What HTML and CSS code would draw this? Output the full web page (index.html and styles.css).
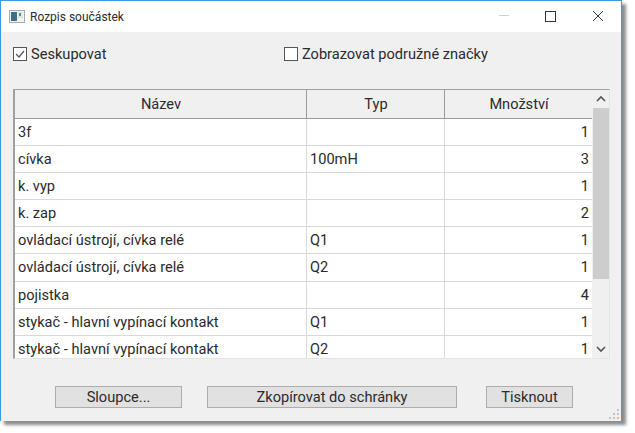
FILE: index.html
```html
<!DOCTYPE html>
<html lang="cs">
<head>
    <meta charset="UTF-8">
    <meta name="viewport" content="width=device-width, initial-scale=1.0">
    <title>Rozpis součástek</title>
    <link rel="stylesheet" href="styles.css">
</head>
<body>
    <div class="window">
        <div class="titlebar">
            <svg class="app-icon" width="16" height="13" viewBox="0 0 16 13">
                <rect x="0.5" y="0.5" width="15" height="12" fill="#f4f4f4" stroke="#a9a9a9"/>
                <rect x="2" y="2" width="6" height="9" fill="#3f7186"/>
                <rect x="9" y="2" width="5" height="6" fill="#dfe9e4"/>
                <rect x="10" y="3" width="2" height="3" fill="#4f9b7d"/>
            </svg>
            <span class="title">Rozpis součástek</span>
            <div class="controls">
                <svg width="47" height="31" viewBox="0 0 47 31"><path d="M19 14.5h10" stroke="#d0d0d0"/></svg>
                <svg width="47" height="31" viewBox="0 0 47 31"><rect x="18.5" y="10.5" width="10" height="10" fill="none" stroke="#333"/></svg>
                <svg width="47" height="31" viewBox="0 0 47 31"><path d="M19 10l10 10M29 10l-10 10" stroke="#333" fill="none"/></svg>
            </div>
        </div>
        <div class="content">
            <div class="options">
                <label class="check check-first">
                    <svg width="14" height="14" viewBox="0 0 14 14">
                        <rect x="0.5" y="0.5" width="13" height="13" fill="#fff" stroke="#555"/>
                        <path d="M3 7l3 3 5-6" fill="none" stroke="#555" stroke-width="1.2"/>
                    </svg>
                    Seskupovat
                </label>
                <label class="check">
                    <svg width="14" height="14" viewBox="0 0 14 14">
                        <rect x="0.5" y="0.5" width="13" height="13" fill="#fff" stroke="#555"/>
                    </svg>
                    Zobrazovat podružné značky
                </label>
            </div>
            <div class="table-box">
                <div class="table">
                    <div class="row head">
                        <div class="cell">Název</div>
                        <div class="cell">Typ</div>
                        <div class="cell">Množství</div>
                    </div>
                    <div class="row"><div class="cell">3f</div><div class="cell"></div><div class="cell num">1</div></div>
                    <div class="row"><div class="cell">cívka</div><div class="cell">100mH</div><div class="cell num">3</div></div>
                    <div class="row"><div class="cell">k. vyp</div><div class="cell"></div><div class="cell num">1</div></div>
                    <div class="row"><div class="cell">k. zap</div><div class="cell"></div><div class="cell num">2</div></div>
                    <div class="row"><div class="cell">ovládací ústrojí, cívka relé</div><div class="cell">Q1</div><div class="cell num">1</div></div>
                    <div class="row"><div class="cell">ovládací ústrojí, cívka relé</div><div class="cell">Q2</div><div class="cell num">1</div></div>
                    <div class="row"><div class="cell">pojistka</div><div class="cell"></div><div class="cell num">4</div></div>
                    <div class="row"><div class="cell">stykač - hlavní vypínací kontakt</div><div class="cell">Q1</div><div class="cell num">1</div></div>
                    <div class="row"><div class="cell">stykač - hlavní vypínací kontakt</div><div class="cell">Q2</div><div class="cell num">1</div></div>
                </div>
                <div class="scrollbar">
                    <svg width="18" height="18" viewBox="0 0 18 18"><path d="M5 11l4-4 4 4" fill="none" stroke="#555" stroke-width="1.6"/></svg>
                    <div class="track"><div class="thumb"></div></div>
                    <svg width="18" height="18" viewBox="0 0 18 18"><path d="M5 7l4 4 4-4" fill="none" stroke="#555" stroke-width="1.6"/></svg>
                </div>
            </div>
            <div class="buttons">
                <div class="btn btn-columns">Sloupce...</div>
                <div class="btn btn-copy">Zkopírovat do schránky</div>
                <div class="btn btn-print">Tisknout</div>
            </div>
            <svg class="grip" width="12" height="12" viewBox="0 0 12 12">
                <path d="M9 1h2v2H9zM5 5h2v2H5zM9 5h2v2H9zM1 9h2v2H1zM5 9h2v2H5zM9 9h2v2H9z" fill="#c4c4c4"/>
            </svg>
        </div>
    </div>
</body>
</html>
```

FILE: styles.css
```css
html, body {
    margin: 0;
    padding: 0;
    background: #fff;
}
body {
    height: 433px;
    overflow: hidden;
    font-family: Roboto, "Open Sans", sans-serif;
    font-size: 14.6px;
    color: #2b2b2b;
}
.window {
    width: 622px;
    height: 421px;
    box-sizing: border-box;
    border: 1px solid #3d9ae0;
    border-bottom: 0;
    background: #f0f0f0;
    box-shadow: 4px 4px 3px #8d8d8d;
    display: flex;
    flex-direction: column;
}
.titlebar {
    height: 31px;
    flex: none;
    background: #fff;
    display: flex;
    align-items: center;
    padding-left: 8px;
}
.app-icon {
    margin-right: 5px;
}
.title {
    font-size: 12px;
}
.controls {
    margin-left: auto;
    display: flex;
}
.content {
    flex: 1;
    position: relative;
    padding: 0 10px 0 12px;
}
.options {
    display: flex;
    height: 44px;
    align-items: center;
}
.check {
    display: flex;
    align-items: center;
    gap: 4px;
}
.check-first {
    width: 271px;
}
.table-box {
    margin-top: 13px;
    width: 597px;
    height: 270px;
    display: flex;
    box-sizing: border-box;
    border: 1px solid #a0a0a0;
    border-left-width: 2px;
    border-bottom: 1px solid #e4e4e4;
    border-right: 1px solid #e4e4e4;
    overflow: hidden;
}
.table {
    width: 577px;
    flex: none;
}
.row {
    display: grid;
    grid-template-columns: 292px 138px 147px;
    height: 27.1px;
    box-sizing: border-box;
    background: #fff;
    border-bottom: 1px solid #d8d8d8;
}
.cell {
    padding: 0 4px 0 3px;
    line-height: 26px;
    white-space: nowrap;
    border-right: 1px solid #d8d8d8;
}
.row .cell:last-child {
    border-right: 0;
}
.num {
    text-align: right;
    padding-right: 3px;
}
.head {
    height: 29px;
    background: #f0f0f0;
    border-bottom: 1px solid #9a9a9a;
}
.head .cell {
    padding-top: 1px;
    padding-left: 5px;
    text-align: center;
    border-right-color: #9a9a9a;
}
.scrollbar {
    flex: 1;
    display: flex;
    flex-direction: column;
    align-items: center;
    background: #f0f0f0;
}
.track {
    flex: 1;
    width: 100%;
}
.thumb {
    width: 16px;
    height: 171px;
    margin: 0 auto;
    background: #cdcdcd;
}
.buttons {
    display: flex;
    margin-top: 27px;
    padding-left: 42px;
}
.btn {
    height: 22px;
    box-sizing: border-box;
    background: #e1e1e1;
    border: 1px solid #adadad;
    text-align: center;
    line-height: 20px;
}
.btn-columns {
    width: 127px;
}
.btn-copy {
    width: 250px;
    margin-left: 25px;
}
.btn-print {
    width: 87px;
    margin-left: 29px;
}
.grip {
    position: absolute;
    right: 1px;
    bottom: 1px;
}
```
